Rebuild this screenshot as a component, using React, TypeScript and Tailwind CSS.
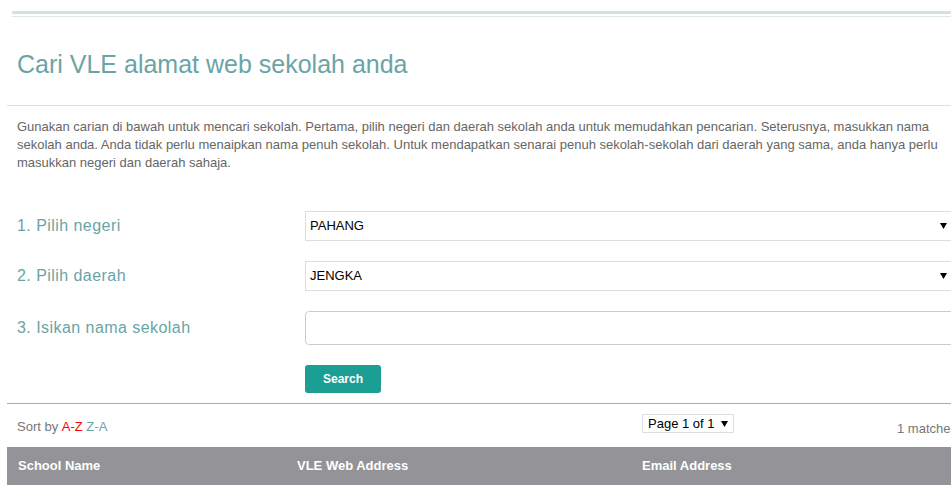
import React from 'react';

const font = { fontFamily: '"Liberation Sans", Arial, sans-serif' };

function Arrow() {
  return (
    <svg width="7" height="6" viewBox="0 0 7 6" className="shrink-0">
      <path d="M0 0 H7 L3.5 6 Z" fill="#000" />
    </svg>
  );
}

function FakeSelect({ value }: { value: string }) {
  return (
    <div className="flex h-[30px] w-[652px] items-center justify-between border border-[#dddddd] bg-white pl-[4px] pr-[9px] text-[13px] text-black">
      <span>{value}</span>
      <Arrow />
    </div>
  );
}

function Row({ label, children }: { label: string; children: React.ReactNode }) {
  return (
    <div className="flex items-center">
      <div className="w-[298px] pl-[10px] text-[16px] tracking-[0.45px] text-[#6aa4a6]">{label}</div>
      {children}
    </div>
  );
}

export default function App() {
  return (
    <div className="h-[499px] w-full overflow-hidden bg-white" style={font}>
      <div className="ml-[7px] w-[960px]">
        <div className="ml-[5px] mt-[11px] h-[3px] bg-[#d4e1e0]" />
        <div className="ml-[5px] mt-[2px] h-px bg-[#dde8e7]" />

        <h1 className="mt-[32px] pl-[10px] text-[25px] leading-[30px] text-[#6aa4a6]">
          Cari VLE alamat web sekolah anda
        </h1>

        <div className="mt-[26px] h-px bg-[#d7e3e3]" />

        <p className="mt-[12px] w-[935px] pl-[10px] text-[13px] leading-[18px] text-[#666666]">
          Gunakan carian di bawah untuk mencari sekolah. Pertama, pilih negeri dan daerah sekolah anda untuk memudahkan pencarian. Seterusnya, masukkan nama sekolah anda. Anda tidak perlu menaipkan nama penuh sekolah. Untuk mendapatkan senarai penuh sekolah-sekolah dari daerah yang sama, anda hanya perlu masukkan negeri dan daerah sahaja.
        </p>

        <div className="mt-[39px] flex flex-col gap-[20px]">
          <Row label="1. Pilih negeri">
            <FakeSelect value="PAHANG" />
          </Row>
          <Row label="2. Pilih daerah">
            <FakeSelect value="JENGKA" />
          </Row>
          <Row label="3. Isikan nama sekolah">
            <div className="h-[34px] w-[652px] rounded-[4px] border border-[#cccccc] bg-white" />
          </Row>
        </div>

        <div className="mt-[20px] pl-[298px]">
          <button className="h-[28px] w-[76px] rounded-[3px] bg-[#1b9e94] text-[12px] font-bold text-white">
            Search
          </button>
        </div>

        <div className="mt-[10px] h-px bg-[#aaaaaa]" />

        <div className="relative flex h-[43px] items-center pl-[10px] pt-[3px] text-[13px]">
          <span className="text-[#777777]">Sort by&nbsp;</span>
          <span className="text-[#ff0000]">A-Z</span>
          <span className="text-[#6aa4a6]">&nbsp;Z-A</span>
          <div className="absolute left-[635px] top-[10px] flex h-[19px] items-center gap-[6px] border border-[#dddddd] pl-[5px] pr-[5px] text-[13px] text-black">
            <span>Page 1 of 1</span>
            <Arrow />
          </div>
          <span className="absolute left-[890px] top-[15px] text-[13px] text-[#777777]">1 matches</span>
        </div>

        <div className="flex h-[38px] items-center bg-[#949498] text-[13px] font-bold text-white">
          <div className="w-[290px] pl-[11px]">School Name</div>
          <div className="w-[345px]">VLE Web Address</div>
          <div>Email Address</div>
        </div>
      </div>
    </div>
  );
}
